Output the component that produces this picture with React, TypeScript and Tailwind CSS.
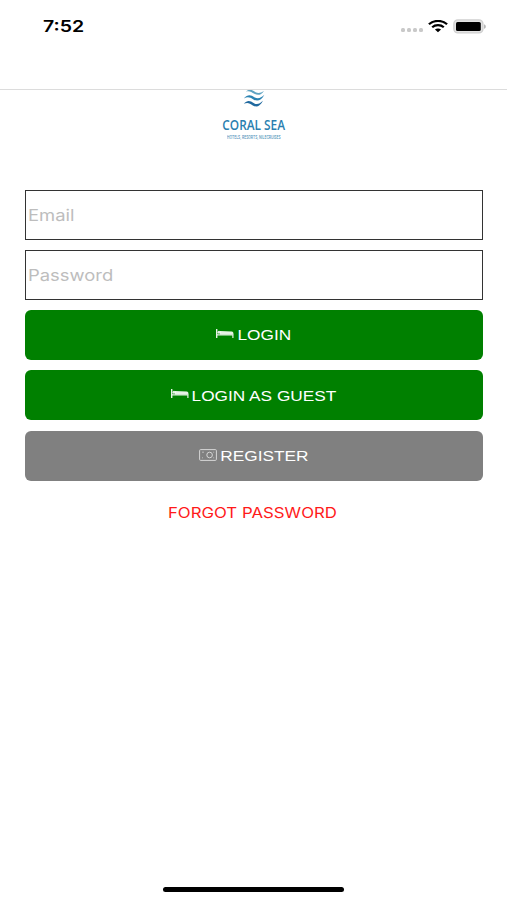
import type { ReactNode } from "react";

function StatusBar() {
  return (
    <div className="flex h-[52px] items-center justify-between pl-[43px] pr-5">
      <span className="inline-block origin-left scale-x-[1.22] text-[16px] font-semibold leading-none text-black">
        7:52
      </span>
      <div className="flex items-center">
        <div className="mt-[7px] flex gap-[2px]">
          <span className="size-1 rounded-[1.5px] bg-[#c9c9c9]" />
          <span className="size-1 rounded-[1.5px] bg-[#c9c9c9]" />
          <span className="size-1 rounded-[1.5px] bg-[#c9c9c9]" />
          <span className="size-1 rounded-[1.5px] bg-[#c9c9c9]" />
        </div>
        <svg className="ml-[5px]" width="20" height="13" viewBox="0 0 19 13" preserveAspectRatio="none" fill="none" stroke="#000">
          <path d="M0.9 4.3C5.6-0.2 13.4-0.2 18.1 4.3" strokeWidth="2.2" />
          <path d="M4 7.2C7 4.4 12 4.4 15 7.2" strokeWidth="2.1" />
          <path d="M6.6 9.6C8.2 8 10.8 8 12.4 9.6L9.5 12.2Z" fill="#000" stroke="none" />
        </svg>
        <svg className="ml-[5px]" width="34" height="15" viewBox="0 0 34 15">
          <rect x="0.9" y="0.9" width="29" height="13" rx="4" fill="#e4e4e4" stroke="#cfcfcf" strokeWidth="1.4" />
          <rect x="3" y="2.9" width="24.8" height="9.2" rx="1.6" fill="#000" />
          <path d="M31.2 5.2C33.2 6 33.2 9 31.2 9.8Z" fill="#a8a8a8" />
        </svg>
      </div>
    </div>
  );
}

function Logo() {
  return (
    <div className="flex h-[99px] flex-col items-center">
      <svg width="22" height="18" viewBox="0 0 22 18" fill="none">
        <path d="M3 1.6C7-2 9.8 0.4 12.6 2.2C15.4 3.8 18 2.8 21 1C18 5.4 14.6 5.6 11.4 3.8C8.4 2 6.4 0.4 3 1.6Z" fill="#5fa3c2" />
        <path d="M0.8 8.4C4.8 3.8 8.2 5 11.4 7.2C15 9.4 17.8 8 21.4 4.8C18 11 14 11.6 10.4 9.4C7 7.2 4.8 6.4 0.8 8.4Z" fill="#2b83b3" />
        <path d="M0.8 13.8C4.4 9.6 7.4 10.8 10.6 13C14 15.2 16.6 13.8 20 10.8C17 16.8 13.2 17.6 9.8 15.4C6.6 13.2 4.6 12 0.8 13.8Z" fill="#20699f" />
      </svg>
      <span className="mt-[8px] inline-block scale-x-[0.79] whitespace-nowrap font-['Open_Sans',sans-serif] text-[15px] font-semibold leading-[16px] text-[#2a7fb0]">
        CORAL SEA
      </span>
      <span className="mt-[3px] inline-block scale-x-[0.79] whitespace-nowrap text-[4.2px] font-medium leading-[5px] text-[#4a8fb8]">
        HOTELS, RESORTS, NILECRUISES
      </span>
    </div>
  );
}

function BedIcon() {
  return (
    <svg width="18" height="10" viewBox="0 0 18 10" fill="#fff" fillOpacity="0.9">
      <path d="M0 0H1.4V5.2H17.5V9H16.3V6.6H1.4V9H0Z" />
      <circle cx="3" cy="3.3" r="1.5" />
      <path d="M4 2L15.7 2.5C17 2.6 17.5 3.2 17.5 5.4H4Z" />
    </svg>
  );
}

function CashIcon() {
  return (
    <svg width="18" height="12" viewBox="0 0 18 12" fill="none" stroke="#d6d6d6">
      <rect x="0.6" y="0.6" width="16.8" height="10.8" rx="1" />
      <circle cx="10.6" cy="6" r="2.8" />
      <path d="M3 3.2H5M14.2 3.2H15.2M3 8.8H4M14.2 8.8H15.2" strokeWidth="0.7" />
    </svg>
  );
}

function Field({ placeholder, type }: { placeholder: string; type: string }) {
  return (
    <label className="flex h-[50px] items-center border border-[#333] pl-[2px]">
      <input
        type={type}
        placeholder={placeholder}
        className="w-[380px] origin-left scale-x-[1.15] bg-transparent text-[16px] text-black outline-none placeholder:text-[#bdbdbd]"
      />
    </label>
  );
}

function Button({ color, icon, children }: { color: string; icon: ReactNode; children: ReactNode }) {
  return (
    <button
      type="button"
      className={`flex h-[50px] items-center justify-center gap-[3px] rounded-[6px] pr-px pt-px font-['Liberation_Sans',sans-serif] text-[15px] text-white ${color}`}
    >
      <span className="-mt-[3px]">{icon}</span>
      {children}
    </button>
  );
}

export default function App() {
  return (
    <div className="flex h-[900px] w-[507px] flex-col overflow-hidden bg-white font-[Inter,sans-serif]">
      <header className="h-[90px] shrink-0 border-b border-[#dcdcdc]">
        <StatusBar />
      </header>

      <main className="flex flex-1 flex-col pl-[25px] pr-[24px]">
        <Logo />
        <form className="flex flex-col gap-[10.3px] pt-[0.5px]">
          <Field placeholder="Email" type="text" />
          <Field placeholder="Password" type="password" />
          <Button color="bg-[#008000]" icon={<BedIcon />}>
            <span className="flex w-[54px] justify-center">
              <span className="scale-x-[1.15]">LOGIN</span>
            </span>
          </Button>
          <Button color="bg-[#008000]" icon={<BedIcon />}>
            <span className="flex w-[145px] justify-center whitespace-nowrap">
              <span className="scale-x-[1.15]">LOGIN AS GUEST</span>
            </span>
          </Button>
          <Button color="bg-[#808080]" icon={<CashIcon />}>
            <span className="flex w-[89px] justify-center">
              <span className="scale-x-[1.15]">REGISTER</span>
            </span>
          </Button>
        </form>
        <a href="#" className="mt-[22px] self-center whitespace-nowrap text-[14px] leading-[20px] text-[#ff1a1a]">
          <span className="mr-[3px] inline-block scale-x-[1.2]">FORGOT PASSWORD</span>
        </a>
      </main>

      <div className="mb-[8px] h-[5px] w-[181px] shrink-0 self-center rounded-full bg-black" />
    </div>
  );
}
